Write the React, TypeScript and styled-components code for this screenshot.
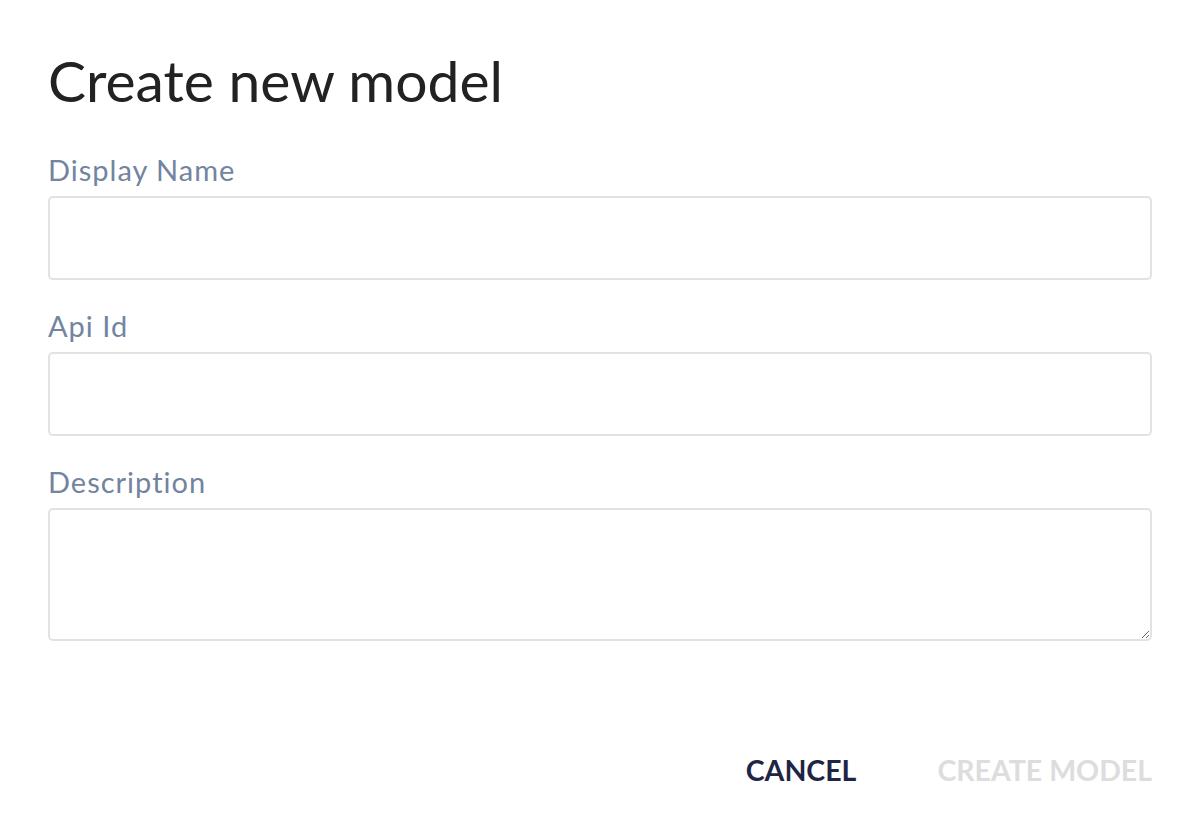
import React from 'react';
import styled, { createGlobalStyle } from 'styled-components';

const GlobalStyle = createGlobalStyle`
  html, body {
    margin: 0;
    padding: 0;
    background: #ffffff;
  }
  body {
    font-family: Lato, 'Open Sans', sans-serif;
  }
`;

const Dialog = styled.div`
  width: 1200px;
  height: 824px;
  box-sizing: border-box;
  padding: 44px 48px 0;
  display: flex;
  flex-direction: column;
`;

const Title = styled.h1`
  margin: 0 0 36px;
  font-size: 57px;
  font-weight: 400;
  line-height: 72px;
  color: #222222;
`;

const Field = styled.div`
  display: flex;
  flex-direction: column;
  gap: 8px;
  margin-bottom: 28px;
`;

const Label = styled.label`
  font-size: 29px;
  letter-spacing: 1px;
  line-height: 36px;
  color: #7284a0;
`;

const TextInput = styled.input`
  box-sizing: border-box;
  width: 100%;
  height: 84px;
  border: 2px solid #e2e2e2;
  border-radius: 5px;
  outline: none;
  padding: 0 16px;
  font: inherit;
  font-size: 28px;
`;

const TextArea = styled.textarea`
  box-sizing: border-box;
  width: 100%;
  height: 133px;
  border: 2px solid #e2e2e2;
  border-radius: 5px;
  outline: none;
  padding: 12px 16px;
  font: inherit;
  font-size: 28px;
  resize: vertical;
`;

const Actions = styled.div`
  margin-top: auto;
  margin-bottom: 36px;
  display: flex;
  justify-content: flex-end;
  align-items: center;
  gap: 81px;
`;

const Button = styled.button<{ $disabled?: boolean }>`
  border: none;
  background: transparent;
  padding: 0;
  font-family: Lato, 'Open Sans', sans-serif;
  font-size: 28.5px;
  font-weight: 700;
  line-height: 36px;
  text-transform: uppercase;
  color: ${(p) => (p.$disabled ? '#dddddd' : '#1f2545')};
  cursor: ${(p) => (p.$disabled ? 'default' : 'pointer')};
`;

const App = () => {
  return (
    <>
      <GlobalStyle />
      <Dialog>
        <Title>Create new model</Title>
        <Field>
          <Label>Display Name</Label>
          <TextInput type="text" />
        </Field>
        <Field>
          <Label>Api Id</Label>
          <TextInput type="text" />
        </Field>
        <Field>
          <Label>Description</Label>
          <TextArea />
        </Field>
        <Actions>
          <Button>Cancel</Button>
          <Button $disabled>Create model</Button>
        </Actions>
      </Dialog>
    </>
  );
};

export default App;
